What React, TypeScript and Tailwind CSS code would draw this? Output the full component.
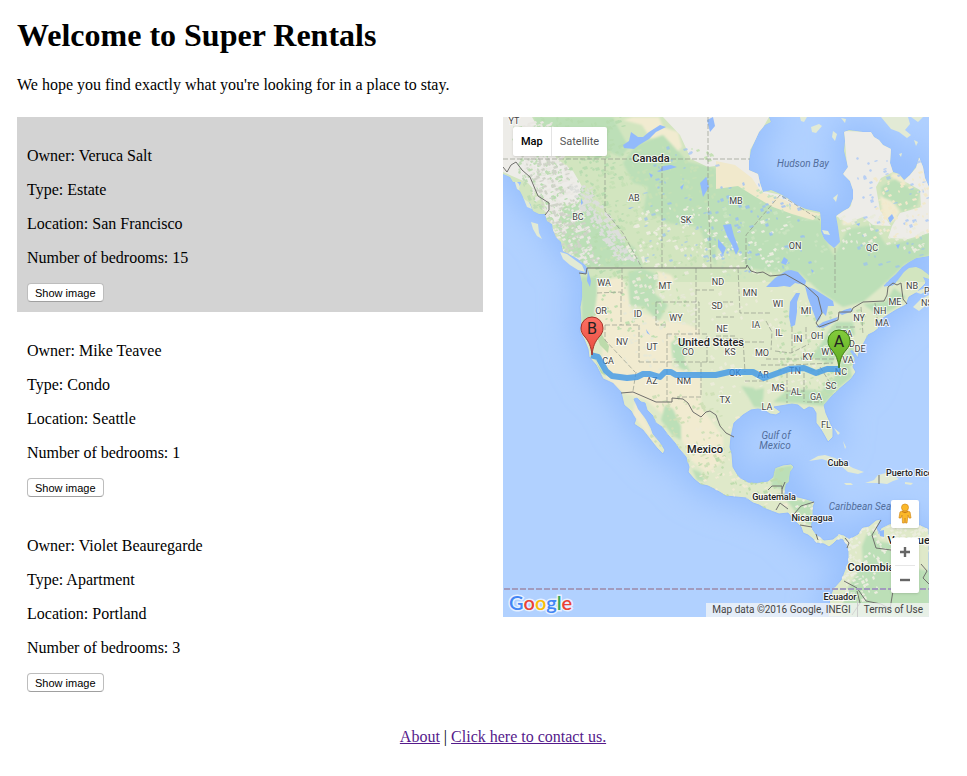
import React from "react";

type Rental = {
  owner: string;
  type: string;
  location: string;
  bedrooms: number;
  highlighted?: boolean;
};

const rentals: Rental[] = [
  { owner: "Veruca Salt", type: "Estate", location: "San Francisco", bedrooms: 15, highlighted: true },
  { owner: "Mike Teavee", type: "Condo", location: "Seattle", bedrooms: 1 },
  { owner: "Violet Beauregarde", type: "Apartment", location: "Portland", bedrooms: 3 },
];

function RentalCard({ rental }: { rental: Rental }) {
  return (
    <article className={rental.highlighted ? "bg-[#d3d3d3] px-2.5 pt-[30px] pb-2.5" : "px-2.5 pt-[30px] pb-2.5"}>
      <div className="flex flex-col gap-4">
        <p>Owner: {rental.owner}</p>
        <p>Type: {rental.type}</p>
        <p>Location: {rental.location}</p>
        <p>Number of bedrooms: {rental.bedrooms}</p>
        <button
          type="button"
          className="h-[19px] self-start rounded border border-[#bdbdbd] border-b-[#a0a0a0] bg-white px-[7px] font-['Liberation_Sans',sans-serif] text-[11px] leading-4"
        >
          Show image
        </button>
      </div>
    </article>
  );
}

const MAINLAND =
  "M0 0 L0 57 L7 60 L10 65 L18 65 L16 72 L21 82 L27 86 L30 94 L36 97 L42 97 L44 104 L49 107 L50 113 L53 120 L58 125 L60 134 L66 137 L75 142 L82 148 L85 152 L84 157 L77 157 L79 165 L79 180 L77 190 L78 205 L77 215 L81 222 L85 232 L86 240 L93 248 L97 256 L100 262 L110 266 L118 275 L121 288 L128 294 L133 302 L131 307 L140 313 L147 322 L154 331 L160 337 L162 333 L157 325 L150 317 L148 311 L143 302 L135 292 L131 282 L134 281 L138 285 L142 286 L144 293 L150 299 L153 306 L159 310 L165 318 L172 326 L177 333 L183 340 L186 350 L185 355 L191 362 L197 367 L205 369 L213 373 L223 379 L233 380 L243 381 L250 386 L256 388 L263 392 L276 397 L285 396 L290 402 L298 410 L300 416 L305 418 L310 422 L313 426 L321 427 L326 430 L330 427 L334 423 L339 422 L343 427 L345 433 L345 445 L341 455 L338 463 L330 472 L327 480 L326 489 L325 500 L426 500 L426 412 L420 409 L413 407 L407 410 L396 405 L386 407 L378 411 L376 417 L374 410 L378 402 L373 403 L366 409 L360 410 L355 417 L346 422 L341 418 L336 417 L330 422 L321 423 L313 417 L308 410 L310 400 L310 390 L312 385 L303 382 L295 380 L281 379 L283 367 L286 365 L287 355 L291 350 L288 347 L280 348 L272 351 L270 360 L265 364 L253 366 L245 365 L236 360 L230 350 L229 337 L227 330 L228 320 L231 306 L240 298 L248 293 L255 292 L261 293 L267 297 L273 298 L278 295 L271 290 L283 288 L289 287 L295 288 L301 293 L306 290 L310 291 L313 296 L313 306 L317 311 L320 316 L325 325 L330 320 L330 312 L327 305 L323 296 L321 288 L328 280 L335 273 L341 268 L348 262 L353 255 L350 250 L352 241 L347 234 L349 233 L355 241 L356 235 L361 226 L365 218 L371 215 L376 211 L373 208 L377 203 L385 198 L393 193 L403 188 L406 180 L413 176 L418 171 L423 166 L420 160 L426 162 L426 158 L418 152 L413 150 L406 151 L401 155 L395 163 L390 168 L381 169 L387 162 L393 157 L399 150 L406 145 L413 141 L426 139 L426 70 L422 61 L420 50 L416 40 L413 50 L407 58 L401 63 L396 57 L390 55 L387 46 L388 32 L380 28 L376 23 L371 20 L368 15 L360 15 L346 13 L341 15 L342 24 L341 34 L345 50 L340 57 L347 64 L350 73 L350 82 L346 91 L340 94 L333 99 L335 110 L337 125 L331 131 L326 127 L321 122 L318 115 L318 103 L317 95 L303 92 L293 88 L283 80 L275 76 L268 73 L260 75 L257 66 L255 57 L246 53 L246 44 L248 33 L251 26 L256 15 L262 8 L268 5 L266 0 Z";

const ISLANDS =
  "M57 135 L64 137 L72 143 L79 148 L82 155 L75 153 L67 148 L60 142Z M28 105 L35 107 L36 116 L39 122 L34 119 L30 112Z M11 62 L16 67 L19 75 L14 72Z M20 80 L25 83 L29 92 L24 90Z M306 344 L315 339 L322 338 L332 341 L341 346 L350 351 L361 355 L355 357 L345 355 L338 349 L328 345 L319 342Z M375 358 L383 356 L391 359 L396 362 L390 364 L384 367 L376 366 L362 366 L371 363Z M402 365 L410 366 L408 368 L402 367Z M341 366 L348 366 L350 368 L343 368Z M410 190 L418 182 L426 178 L426 186 L416 194Z M412 175 L422 171 L425 173 L418 177Z M308 10 L316 7 L319 9 L313 16 L309 15Z M297 0 L304 0 L301 5 L298 4Z M330 14 L334 17 L332 24 L329 20Z M338 1 L343 2 L342 6Z M378 0 L405 0 L407 7 L402 13 L408 18 L404 21 L396 15 L388 12Z M411 23 L415 25 L413 29Z M396 37 L399 36 L398 40Z M408 0 L420 0 L415 5Z M319 113 L325 114 L327 118 L321 117Z M330 81 L335 77 L333 85Z M331 311 L337 316 L335 318Z M340 324 L343 330 L342 332Z";

const LAKES =
  "M120 28 L126 24 L128 15 L135 20 L140 20 L146 15 L157 8 L163 10 L153 15 L146 22 L136 28 L131 32 L121 31Z M155 55 L160 49 L168 48 L174 50 L164 53Z M146 56 L150 58 L148 61Z M197 66 L203 60 L206 70 L200 80Z M177 70 L181 67 L179 73Z M220 108 L228 107 L231 119 L236 132 L233 138 L229 128 L224 119Z M215 122 L223 131 L220 138 L215 130Z M204 3 L210 0 L212 9 L207 15Z M281 140 L285 143 L283 148 L278 146Z M288 210 L286 200 L287 185 L293 176 L297 176 L294 185 L294 195 L292 208Z M263 170 L272 161 L281 155 L288 153 L295 155 L303 164 L302 168 L292 166 L287 170 L281 169 L274 170Z M302 169 L311 172 L319 177 L330 184 L331 189 L325 189 L323 199 L319 195 L317 202 L314 205 L309 192 L305 181Z M313 210 L320 205 L335 200 L333 204 L320 211Z M336 196 L341 193 L348 191 L350 194 L339 198Z M385 101 L389 97 L391 101 L387 106Z M353 107 L357 106 L356 109Z M77 142 L85 152 L84 164 L87 170 L88 164 L85 153Z M78 81 L80 86 L78 88Z M143 212 L147 218 L144 216Z M125 91 L131 90 L127 92Z M376 414 L381 413 L381 420 L377 419Z M308 152 L311 154 L309 156Z M393 128 L397 127 L395 132Z";

const FORESTS =
  "M30 0 L110 0 L117 14 L126 30 L118 40 L102 33 L93 39 L70 35 L45 38Z M62 90 L80 83 L95 96 L112 118 L132 131 L140 150 L84 150 L65 132 L55 116 L52 100Z M133 28 L160 18 L185 45 L213 51 L213 150 L196 110 L163 106 L157 99 L140 95 L145 70 L130 66 L120 46Z M205 55 L233 60 L252 74 L282 93 L305 103 L317 103 L326 130 L331 139 L345 112 L370 108 L383 128 L410 122 L426 115 L426 138 L402 147 L378 170 L360 185 L340 190 L317 175 L296 155 L270 155 L244 151 L237 137 L213 130Z M78 160 L94 160 L94 178 L91 198 L84 215 L79 213Z M125 155 L140 152 L155 158 L151 176 L165 188 L156 204 L141 190 L127 188Z M168 226 L175 220 L187 225 L181 242 L187 255 L177 251 L170 240Z M162 288 L170 292 L178 309 L178 323 L169 318 L158 303Z M270 285 L282 275 L301 272 L318 274 L331 261 L341 240 L348 228 L352 225 L347 249 L349 260 L334 272 L320 289 L293 286Z M307 240 L318 227 L326 213 L333 205 L350 205 L352 218 L341 222 L329 247Z M360 187 L383 184 L391 171 L403 180 L392 191 L376 199Z M272 351 L290 348 L286 364 L281 373 L268 369Z M283 382 L308 384 L309 408 L301 405 L294 397Z M364 417 L372 413 L374 424 L396 428 L404 450 L426 454 L426 500 L337 500 L342 477 L348 466 L360 446 L359 429Z M189 352 L197 355 L203 365 L194 363Z M252 273 L261 271 L260 284 L252 281Z M378 70 L392 62 L406 71 L417 73 L414 89 L400 95 L393 86 L380 80Z M371 59 L377 60 L374 65Z M238 269 L251 271 L258 284 L262 291 L251 290 L246 281Z M40 136 L44 145 L40 144Z";

const DESERTS =
  "M81 170 L98 163 L119 160 L125 178 L128 192 L158 203 L180 206 L197 212 L196 231 L168 227 L169 250 L198 260 L198 290 L210 306 L220 320 L220 345 L204 356 L190 345 L180 325 L170 306 L143 283 L121 276 L103 261 L99 240 L101 214 L93 200Z M132 284 L142 302 L153 325 L160 336 L145 318 L130 298Z M154 154 L168 158 L172 164 L160 169 L153 161Z M120 3 L130 0 L156 0 L160 10 L175 15 L179 30 L168 41 L164 28 L156 23 L148 22 L139 8Z M340 97 L350 101 L348 108 L339 108Z M377 79 L388 82 L397 95 L390 105 L380 101Z M388 56 L397 57 L404 67 L393 70Z";

const ARCTIC =
  "M160 0 L266 0 L247 33 L246 53 L256 57 L260 74 L278 78 L300 91 L270 86 L246 67 L225 47 L205 50 L188 42 L177 18Z M341 14 L368 15 L388 31 L390 55 L378 61 L373 70 L377 93 L388 109 L370 108 L360 100 L345 106 L333 99 L348 89 L350 73 L340 57 L344 48Z M416 40 L426 50 L426 116 L405 122 L385 121 L389 109 L397 96 L418 90 L417 73 L401 64 L413 51Z M0 0 L29 0 L37 14 L54 42 L70 54 L80 71 L76 85 L62 88 L54 107 L44 101 L41 84 L25 66 L0 55Z";

const TUNDRA =
  "M213 44 L232 48 L249 61 L258 75 L282 83 L300 93 L318 97 L310 103 L289 97 L270 90 L251 79 L235 69 L213 72Z";

const VALLEYS = "M94 201L99 218L106 229L105 236L97 228L92 214Z M91 240L95 248L103 259L98 256Z";

const INTERNATIONAL =
  "M0 50 L4 55 L8 48 L13 45 L19 53 L27 60 L35 79 L46 86 L46 93 L42 98 M76 156 L83 157 L84 151 L243 151 L244 148 L248 154 L254 156 L260 155 L267 159 L278 158 L282 157 L303 169 L315 180 L319 196 L313 206 L316 210 L335 203 L336 195 L348 195 L350 191 L360 185 L381 184 L384 178 L385 170 L390 166 L394 168 L398 166 L400 182 L404 187 M118 276 L130 275 L153 285 L169 285 L169 281 L180 282 L185 286 L190 295 L198 300 L203 295 L207 294 L213 298 L217 309 L223 316 L231 320 M265 373 L269 369 L279 369 L279 379 M282 365 L279 372 M273 393 L277 386 L285 392 M291 397 L298 389 L311 385 M297 408 L309 410 M313 417 L315 423 M342 421 L346 426 L344 431 M378 403 L369 418 L373 431 L388 433 L394 442 M341 464 L354 471 L363 484 L378 487 L387 492 L390 474 M349 498 L357 486 L354 474 M418 447 L424 454 L420 461 L426 467 M376 358 L376 367";

const STATE_LINES =
  "M0 42 H247 M102 42 V94 L120 116 L139 151 M159 42 V151 M205 0 L205 75 L208 151 M243 147 V118 L277 78 L317 103 M332 131 V176 M94 176 L118 175 V208 M102 208 H136 M102 208 V223 L132 255 M136 208 V245 M153 185 H196 V217 M153 185 V208 H164 M136 245 H213 M164 217 H204 V245 M164 217 V285 M198 245 V280 H174 M133 255 L130 274 M119 151 V178 M193 151 V173 H213 M193 173 V217 M213 185 H230 M213 200 H231 M213 219 H233 M202 222 H240 L242 255 M235 151 L237 196 H267 M242 225 H263 M263 204 L269 215 L268 233 M289 210 V236 M303 210 V223 M272 234 L288 236 L306 227 M263 242 H348 M258 248 L286 248 L330 246 M284 256 V286 M301 256 V285 M284 274 H301 M242 264 H265 M304 285 H319 M317 250 L331 272 M333 210 H353 M358 190 L360 217 M372 186 L375 207";

const LABELS: [number, number, string][] = [
  [5, 7, "YT"], [69, 103, "BC"], [125, 84, "AB"], [177, 106, "SK"], [227, 87, "MB"], [286, 132, "ON"], [363, 134, "QC"],
  [95, 169, "WA"], [156, 172, "MT"], [209, 168, "ND"], [241, 179, "MN"], [403, 172, "NB"], [418, 189, "NS"],
  [92, 197, "OR"], [129, 200, "ID"], [167, 204, "WY"], [208, 192, "SD"], [269, 190, "WI"], [297, 197, "MI"],
  [350, 204, "NY"], [371, 197, "NH"], [386, 188, "ME"], [373, 209, "MA"], [113, 228, "NV"], [143, 233, "UT"],
  [179, 238, "CO"], [213, 215, "NE"], [247, 211, "IA"], [270, 219, "IL"], [289, 225, "IN"], [308, 222, "OH"],
  [338, 220, "PA"], [221, 238, "KS"], [253, 239, "MO"], [299, 243, "KY"], [319, 238, "WV"], [339, 230, "MD"],
  [351, 235, "DE"], [339, 246, "VA"], [99, 247, "CA"], [143, 267, "AZ"], [175, 267, "NM"], [226, 259, "OK"],
  [254, 261, "AR"], [286, 257, "TN"], [332, 258, "NC"], [322, 272, "SC"], [269, 274, "MS"], [287, 278, "AL"],
  [307, 283, "GA"], [216, 286, "TX"], [258, 293, "LA"], [317, 311, "FL"],
];

// Scatters small square-edged patches inside a rectangle, giving the terrain its mottled relief.
function scatter(seed: number, count: number, x: number, y: number, w: number, h: number, drift = 0) {
  let state = seed;
  const next = () => {
    state = (state * 16807) % 2147483647;
    return state / 2147483647;
  };
  let d = "";
  for (let i = 0; i < count; i++) {
    const t = next();
    const px = Math.round(x + next() * w + t * drift);
    const py = Math.round(y + t * h);
    const a = 1 + Math.round(next() * 3);
    const b = 1 + Math.round(next() * 2);
    d += `M${px} ${py}l${a} -1l1 ${b}l-${a} 1z`;
  }
  return d;
}

function Pin({ x, y, letter, fill, light, edge }: { x: number; y: number; letter: string; fill: string; light: string; edge: string }) {
  return (
    <g transform={`translate(${x} ${y})`}>
      <linearGradient id={`pin-${letter}`} x1="0" y1="0" x2="0" y2="1">
        <stop offset="0" stopColor={light} />
        <stop offset="1" stopColor={fill} />
      </linearGradient>
      <path
        d="M0 0C-1 -9 -3 -13 -7 -18C-10 -21 -11 -24 -11 -27A11 11 0 0 1 11 -27C11 -24 10 -21 7 -18C3 -13 1 -9 0 0Z"
        fill={`url(#pin-${letter})`}
        stroke={edge}
      />
      <text y="-21" textAnchor="middle" fontSize="16" fill="#222">{letter}</text>
    </g>
  );
}

function MapDrawing() {
  return (
    <svg viewBox="0 0 426 500" preserveAspectRatio="xMidYMid slice" className="block h-full w-full font-[Roboto,sans-serif]" role="img" aria-label="Map of North America with a route from B to A">
      <defs>
        <clipPath id="land"><path d={MAINLAND} /></clipPath>
        <filter id="shelf" x="-20%" y="-20%" width="140%" height="140%"><feGaussianBlur stdDeviation="15" /></filter>
        <filter id="soft"><feGaussianBlur stdDeviation="1" /></filter>
      </defs>
      <rect width="426" height="500" fill="#b1d1ff" />
      <path d={MAINLAND} fill="#98c0fd" stroke="#98c0fd" strokeWidth="20" filter="url(#shelf)" />
      <g stroke="#96bdfd" strokeWidth="1">
        <path d={MAINLAND} fill="#dfe9c9" />
        <path d={ISLANDS} fill="#e2ead5" stroke="none" />
      </g>
      <g clipPath="url(#land)">
        <path d="M0 0H426V165H0Z" fill="#d2e5bf" />
        <path d={DESERTS} fill="#f1ebd0" filter="url(#soft)" />
        <path d={FORESTS} fill="#bcdfb7" filter="url(#soft)" />
        <path d={ARCTIC} fill="#edece8" />
        <path d={TUNDRA} fill="#f1e9cc" />
        <path d={scatter(31, 360, 30, 0, 90, 155)} fill="#b8dcb0" />
        <path d={scatter(303, 160, 2, 5, 40, 120, 30)} fill="#bfdcb5" />
        <path d={scatter(77, 420, 4, 5, 44, 143, 48)} fill="#e9e7e2" />
        <path d={scatter(45, 160, 8, 10, 38, 135, 48)} fill="#cfd3c8" />
        <path d={scatter(9, 220, 62, 68, 22, 75, 50)} fill="#dcdedb" />
        <path d={scatter(12, 240, 90, 30, 120, 118)} fill="#c6e1b6" />
        <path d={scatter(24, 90, 120, 90, 95, 60)} fill="#eceddf" />
        <path d={scatter(63, 60, 140, 30, 80, 115)} fill="#93bafa" opacity=".6" />
        <path d={scatter(82, 110, 215, 70, 110, 90)} fill="#c9e4c0" />
        <path d={scatter(205, 50, 215, 100, 70, 55)} fill="#ebeee0" />
        <path d={scatter(15, 65, 215, 65, 90, 90)} fill="#91b9fb" opacity=".7" />
        <path d={scatter(51, 70, 352, 25, 72, 125)} fill="#95bcfb" opacity=".6" />
        <path d={scatter(19, 60, 335, 98, 85, 35)} fill="#e9ebdc" />
        <path d={scatter(29, 70, 370, 55, 55, 65)} fill="#f2e9cb" />
        <path d={scatter(40, 90, 85, 155, 95, 65)} fill="#c1dfb1" />
        <path d={scatter(37, 120, 120, 155, 70, 100)} fill="#e7e9d8" />
        <path d={scatter(71, 110, 205, 155, 130, 120)} fill="#ebecd9" />
        <path d={scatter(93, 130, 275, 190, 90, 90)} fill="#c3dfb3" />
        <path d={scatter(101, 130, 145, 275, 75, 90)} fill="#cfe0b7" />
        <path d={scatter(123, 110, 190, 330, 90, 65)} fill="#bfdcad" />
        <path d={scatter(156, 100, 180, 300, 100, 90)} fill="#f0ebd4" />
        <path d={scatter(67, 130, 338, 407, 50, 75, -18)} fill="#ebeddf" />
        <path d={scatter(88, 60, 290, 383, 55, 50)} fill="#edeee0" />
        <path d={scatter(81, 55, 386, 404, 40, 30)} fill="#ebeddd" />
        <path d={VALLEYS} fill="#bddbab" />
      </g>
      <path d={LAKES} fill="#92bafb" />
      <path d={STATE_LINES} fill="none" stroke="#8e9587" strokeWidth="1" strokeDasharray="5 2" opacity=".65" />
      <path d={INTERNATIONAL} fill="none" stroke="#70706d" strokeWidth="1" strokeLinejoin="round" />
      <path d="M1 472H426" stroke="#a29bbd" strokeWidth="2" strokeDasharray="6 2" />
      <g fontSize="9" fill="#444" stroke="#fff" strokeOpacity=".75" strokeWidth="2" paintOrder="stroke" textAnchor="middle">
        {LABELS.map(([x, y, name]) => (
          <text key={name} x={x + 6} y={y}>{name}</text>
        ))}
        <text x="421" y="177" textAnchor="start">PE</text>
      </g>
      <path
        d="M91 239 L95 240 L103 254 L109 259 L124 261 L134 260 L140 257 L147 257 L157 260 L162 255 L168 255 L173 258 L213 258 L226 255 L250 255 L261 261 L286 252 L301 251 L313 256 L324 252 L334 252"
        fill="none" stroke="#3895e8" strokeOpacity=".78" strokeWidth="6" strokeLinejoin="round" strokeLinecap="square"
      />
      <g fontSize="11" fontWeight="500" fill="#222" stroke="#fff" strokeOpacity=".8" strokeWidth="2" paintOrder="stroke" textAnchor="middle">
        <text x="148" y="45">Canada</text>
        <text x="208" y="229">United States</text>
        <text x="202" y="336">Mexico</text>
        <text x="368" y="454">Colombia</text>
        <text x="410" y="427">Venezuela</text>
        <g fontSize="9">
          <text x="335" y="349">Cuba</text>
          <text x="383" y="359" textAnchor="start">Puerto Rico</text>
          <text x="271" y="383">Guatemala</text>
          <text x="309" y="404">Nicaragua</text>
          <text x="337" y="483">Ecuador</text>
        </g>
      </g>
      <g fontSize="10" fontStyle="italic" fill="#526e9c" textAnchor="middle">
        <text x="300" y="50">Hudson Bay</text>
        <text x="273" y="322">Gulf of</text>
        <text x="272" y="332">Mexico</text>
        <text x="357" y="393">Caribbean Sea</text>
      </g>
      <Pin x={89} y={238} letter="B" fill="#e94b3e" light="#fb7064" edge="#a33228" />
      <Pin x={336} y={251} letter="A" fill="#5eaa20" light="#83cc3c" edge="#3e7b16" />
      <text x="6" y="493" fontFamily="Lato, sans-serif" fontSize="20" stroke="#fff" strokeOpacity=".7" strokeWidth="3" paintOrder="stroke" fontWeight="600">
        <tspan fill="#4285f4">G</tspan><tspan fill="#ea4335">o</tspan><tspan fill="#fbbc05">o</tspan><tspan fill="#4285f4">g</tspan><tspan fill="#34a853">l</tspan><tspan fill="#ea4335">e</tspan>
      </text>
    </svg>
  );
}

function RentalMap() {
  return (
    <section aria-label="Rental map" className="relative h-[500px] overflow-hidden font-[Roboto,sans-serif] text-[11px]">
      <MapDrawing />
      <div className="absolute top-2.5 left-2.5 flex h-[29px] rounded-xs bg-white shadow-sm">
        <button type="button" className="border-r border-[#e4e4e4] px-2 font-medium text-black">Map</button>
        <button type="button" className="px-2 text-[#565656]">Satellite</button>
      </div>
      <div className="absolute right-2.5 bottom-6 flex w-7 flex-col gap-2.5">
        <button type="button" aria-label="Street View" className="flex h-7 items-center justify-center rounded-xs bg-white shadow-sm">
          <svg width="14" height="22" viewBox="0 0 14 22">
            <path d="M4 8H10L12 9L13 15L11 15L10 12L9 20H7.5L7 15L6.5 20H4.5L4 12L3 15L1 15L2 9Z" fill="#fbb829" stroke="#d38b1c" strokeWidth=".7" />
            <circle cx="7" cy="4.5" r="3.5" fill="#fbb829" stroke="#d38b1c" strokeWidth=".7" />
            <path d="M4 8.500Q7 11 10 8.500" fill="none" stroke="#c97c16" />
          </svg>
        </button>
        <div className="flex flex-col rounded-xs bg-white shadow-sm">
          <button type="button" aria-label="Zoom in" className="flex h-[27px] items-center justify-center">
            <svg width="12" height="12" viewBox="0 0 12 12"><path d="M6 1V11M1 6H11" stroke="#666" strokeWidth="2.400" /></svg>
          </button>
          <div className="mx-1 h-px bg-[#e6e6e6]" />
          <button type="button" aria-label="Zoom out" className="flex h-[27px] items-center justify-center">
            <svg width="12" height="12" viewBox="0 0 12 12"><path d="M1 6H11" stroke="#666" strokeWidth="2.400" /></svg>
          </button>
        </div>
      </div>
      <div className="absolute right-0 bottom-0 flex h-3.5 items-center bg-[#f5f5f5]/75 text-[10px] whitespace-nowrap text-[#444]">
        <span className="px-1.5">Map data ©2016 Google, INEGI</span>
        <a href="#terms" className="border-l border-[#ccc] px-1.5">Terms of Use</a>
      </div>
    </section>
  );
}

export default function App() {
  return (
    <div className="bg-white pt-[17px] pr-[18px] pb-[30px] pl-[17px] font-['Liberation_Serif',serif] text-base leading-[18px] text-black">
      <header>
        <h1 className="text-[32px] leading-[37px] font-bold">Welcome to Super Rentals</h1>
        <p className="mt-[22px] mb-[23px]">We hope you find exactly what you're looking for in a place to stay.</p>
      </header>
      <main className="grid grid-cols-2">
        <div>
          {rentals.map((rental) => (
            <RentalCard key={rental.owner} rental={rental} />
          ))}
        </div>
        <div className="px-5">
          <RentalMap />
        </div>
      </main>
      <footer className="mt-[26px] pl-10 text-center">
        <a href="#about" className="text-[#551a8b] underline">About</a> | <a href="#contact" className="text-[#551a8b] underline">Click here to contact us.</a>
      </footer>
    </div>
  );
}
